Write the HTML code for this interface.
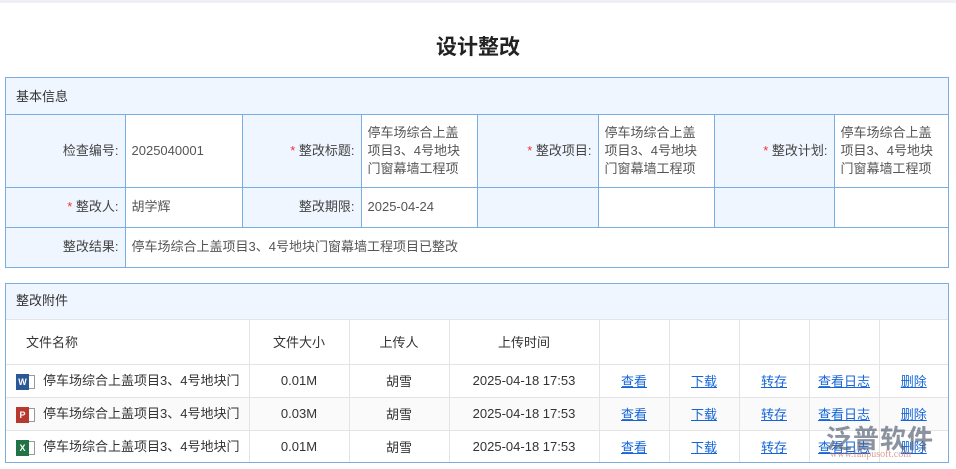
<!DOCTYPE html>
<html><head><meta charset="utf-8"><style>
*{margin:0;padding:0;box-sizing:border-box}
body{width:956px;height:469px;background:#fff;font-family:"Liberation Sans","Noto Sans CJK SC",sans-serif;font-size:13px;color:#333;position:relative;overflow:hidden}
.top{height:3px;background:#eef0f5}
h1{position:absolute;top:31px;left:0;width:956px;text-align:center;font-size:21px;font-weight:bold;color:#222}
.box{position:absolute;left:5px;width:944px;border:1px solid #7aaee0}
.hd{background:#f0f6ff;padding-left:10px;color:#333}
table{border-collapse:collapse;width:100%;table-layout:fixed}
.info td{border:1px solid #7aaee0;padding:0 6px;line-height:18px;color:#555}
.info tr:first-child td{border-top:none}
.info tr td:first-child{border-left:none}
.info tr td:last-child{border-right:none}
.info tr:last-child td{border-bottom:none}
.info td.l{background:#f0f6ff;text-align:right;color:#444}
.s{color:#e33}
.att td{border:1px solid #e4e4e4;text-align:center;color:#333}
.att tr:first-child td{border-top:none}
.att tr td:first-child{border-left:none}
.att tr td:last-child{border-right:none}
.att tr:last-child td{border-bottom:none}
.att a{color:#1565d8;text-decoration:underline}
.ic{display:inline-block;width:20px;height:18px;vertical-align:middle;margin-right:7px;position:relative}
.ic b{position:absolute;left:0;top:1px;width:13px;height:16px;color:#fff;font-size:9px;line-height:16px;text-align:center;font-weight:bold}
.ic i{position:absolute;left:9px;top:2px;width:10px;height:14px;background:#fff;border:1px solid #999}
</style></head><body>
<div class="top"></div>
<h1>设计整改</h1>
<div class="box" style="top:77px">
<div class="hd" style="height:37px;line-height:37px;border-bottom:1px solid #7aaee0">基本信息</div>
<table class="info">
<colgroup><col style="width:119px"><col style="width:117px"><col style="width:119px"><col style="width:116px"><col style="width:121px"><col style="width:116px"><col style="width:120px"><col></colgroup>
<tr style="height:72px"><td class="l">检查编号:</td><td>2025040001</td><td class="l"><span class="s">* </span>整改标题:</td><td>停车场综合上盖项目3、4号地块门窗幕墙工程项</td><td class="l"><span class="s">* </span>整改项目:</td><td>停车场综合上盖项目3、4号地块门窗幕墙工程项</td><td class="l"><span class="s">* </span>整改计划:</td><td>停车场综合上盖项目3、4号地块门窗幕墙工程项</td></tr>
<tr style="height:40px"><td class="l"><span class="s">* </span>整改人:</td><td>胡学辉</td><td class="l">整改期限:</td><td>2025-04-24</td><td class="l"></td><td></td><td class="l"></td><td></td></tr>
<tr style="height:40px"><td class="l">整改结果:</td><td colspan="7">停车场综合上盖项目3、4号地块门窗幕墙工程项目已整改</td></tr>
</table></div>
<div class="box" style="top:283px">
<div class="hd" style="height:36px;line-height:34px;border-bottom:1px solid #e4e4e4">整改附件</div>
<table class="att">
<colgroup><col style="width:243px"><col style="width:100px"><col style="width:100px"><col style="width:150px"><col style="width:70px"><col style="width:70px"><col style="width:70px"><col style="width:70px"><col></colgroup>
<tr style="height:44px"><td style="text-align:left;padding-left:20px">文件名称</td><td>文件大小</td><td>上传人</td><td>上传时间</td><td></td><td></td><td></td><td></td><td></td></tr>
<tr style="height:33px"><td style="text-align:left;padding-left:10px"><span class="ic"><i></i><b style="background:#2b5797">W</b></span>停车场综合上盖项目3、4号地块门</td><td>0.01M</td><td>胡雪</td><td>2025-04-18 17:53</td><td><a>查看</a></td><td><a>下载</a></td><td><a>转存</a></td><td><a>查看日志</a></td><td><a>删除</a></td></tr>
<tr style="height:33px;background:#fafafa"><td style="text-align:left;padding-left:10px"><span class="ic"><i></i><b style="background:#b7382c">P</b></span>停车场综合上盖项目3、4号地块门</td><td>0.03M</td><td>胡雪</td><td>2025-04-18 17:53</td><td><a>查看</a></td><td><a>下载</a></td><td><a>转存</a></td><td><a>查看日志</a></td><td><a>删除</a></td></tr>
<tr style="height:32px"><td style="text-align:left;padding-left:10px"><span class="ic"><i></i><b style="background:#217346">X</b></span>停车场综合上盖项目3、4号地块门</td><td>0.01M</td><td>胡雪</td><td>2025-04-18 17:53</td><td><a>查看</a></td><td><a>下载</a></td><td><a>转存</a></td><td><a>查看日志</a></td><td><a>删除</a></td></tr>
</table></div>
<div style="position:absolute;left:826px;top:419px;font-size:26px;font-weight:bold;color:rgba(90,100,120,0.7);letter-spacing:1px">泛普软件</div>
<div style="position:absolute;left:830px;top:449px;font-size:10px;color:rgba(200,120,100,0.7);font-family:'Liberation Serif',serif">www.fanpusoft.com</div>
</body></html>
